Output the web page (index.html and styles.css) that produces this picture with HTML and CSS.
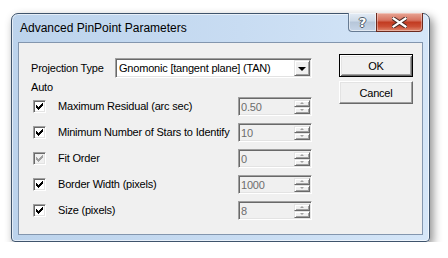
FILE: index.html
```html
<!DOCTYPE html>
<html>
  <head>
    <title>Advanced PinPoint Parameters</title>
    <link rel="stylesheet" href="styles.css">
  </head>
  <body>
    <div class="screen">
      <div class="window">
        <div class="titlebar">
          <span class="title">Advanced PinPoint Parameters</span>
          <div class="caption-buttons">
            <div class="cap-btn help">?</div>
            <div class="cap-btn close">
              <svg width="15" height="11" viewBox="0 0 15 11">
                <path d="M1.5 1.5 L13.5 9.5 M13.5 1.5 L1.5 9.5" stroke="#4a2a24" stroke-width="4.2" stroke-linecap="square" />
                <path d="M1.5 1.5 L13.5 9.5 M13.5 1.5 L1.5 9.5" stroke="#fff" stroke-width="2.2" stroke-linecap="square" />
              </svg>
            </div>
          </div>
        </div>
        <div class="client">
          <div class="params">
            <div class="projection">
              <label class="projection-label">Projection Type</label>
              <div class="combo">
                <span class="combo-text">Gnomonic [tangent plane] (TAN)</span>
                <span class="combo-btn"><span class="arrow-down"></span></span>
              </div>
            </div>
            <div class="auto">Auto</div>

            <div class="row">
              <span class="check">
                <svg width="7" height="7" viewBox="0 0 7 7"><path d="M0 2h1v3h-1zM1 3h1v3h-1zM2 4h1v3h-1zM3 3h1v3h-1zM4 2h1v3h-1zM5 1h1v3h-1zM6 0h1v3h-1z" /></svg>
              </span>
              <span class="row-label">Maximum Residual (arc sec)</span>
              <div class="spin">
                <span class="spin-value">0.50</span>
                <span class="spin-btns"><span class="spin-btn"><span class="tri-up"></span></span><span class="spin-btn"><span class="tri-down"></span></span></span>
              </div>
            </div>

            <div class="row">
              <span class="check">
                <svg width="7" height="7" viewBox="0 0 7 7"><path d="M0 2h1v3h-1zM1 3h1v3h-1zM2 4h1v3h-1zM3 3h1v3h-1zM4 2h1v3h-1zM5 1h1v3h-1zM6 0h1v3h-1z" /></svg>
              </span>
              <span class="row-label">Minimum Number of Stars to Identify</span>
              <div class="spin">
                <span class="spin-value">10</span>
                <span class="spin-btns"><span class="spin-btn"><span class="tri-up"></span></span><span class="spin-btn"><span class="tri-down"></span></span></span>
              </div>
            </div>

            <div class="row">
              <span class="check disabled">
                <svg width="7" height="7" viewBox="0 0 7 7"><path d="M0 2h1v3h-1zM1 3h1v3h-1zM2 4h1v3h-1zM3 3h1v3h-1zM4 2h1v3h-1zM5 1h1v3h-1zM6 0h1v3h-1z" /></svg>
              </span>
              <span class="row-label">Fit Order</span>
              <div class="spin">
                <span class="spin-value">0</span>
                <span class="spin-btns"><span class="spin-btn"><span class="tri-up"></span></span><span class="spin-btn"><span class="tri-down"></span></span></span>
              </div>
            </div>

            <div class="row">
              <span class="check">
                <svg width="7" height="7" viewBox="0 0 7 7"><path d="M0 2h1v3h-1zM1 3h1v3h-1zM2 4h1v3h-1zM3 3h1v3h-1zM4 2h1v3h-1zM5 1h1v3h-1zM6 0h1v3h-1z" /></svg>
              </span>
              <span class="row-label">Border Width (pixels)</span>
              <div class="spin">
                <span class="spin-value">1000</span>
                <span class="spin-btns"><span class="spin-btn"><span class="tri-up"></span></span><span class="spin-btn"><span class="tri-down"></span></span></span>
              </div>
            </div>

            <div class="row">
              <span class="check">
                <svg width="7" height="7" viewBox="0 0 7 7"><path d="M0 2h1v3h-1zM1 3h1v3h-1zM2 4h1v3h-1zM3 3h1v3h-1zM4 2h1v3h-1zM5 1h1v3h-1zM6 0h1v3h-1z" /></svg>
              </span>
              <span class="row-label">Size (pixels)</span>
              <div class="spin">
                <span class="spin-value">8</span>
                <span class="spin-btns"><span class="spin-btn"><span class="tri-up"></span></span><span class="spin-btn"><span class="tri-down"></span></span></span>
              </div>
            </div>
          </div>
          <div class="actions">
            <button class="btn default">OK</button>
            <button class="btn">Cancel</button>
          </div>
        </div>
      </div>
    </div>
  </body>
</html>
```

FILE: styles.css
```css
/* Win7 basic dialog with classic controls */
* {
  box-sizing: border-box;
}
body {
  margin: 0;
  background-color: #fff;
  color: #000;
  font-family: "Liberation Sans", Arial, sans-serif;
  font-size: 11px;
  letter-spacing: -0.2px;
}
.screen {
  padding: 13px 0 0 11px;
}
.window {
  width: 419px;
  height: 229px;
  border: 1px solid #3f546c;
  border-radius: 7px 7px 4px 4px;
  background: linear-gradient(to right, #bcd3ec, #c8dcf2 55%, #d5e6f8);
  box-shadow: inset 0 0 0 1px rgba(255, 255, 255, 0.6),
    3px 4px 10px rgba(0, 0, 0, 0.45);
  padding: 0 6px 6px 6px;
  display: flex;
  flex-direction: column;
}
.titlebar {
  height: 28px;
  display: flex;
  align-items: flex-start;
}
.title {
  font-family: "Liberation Sans", Arial, sans-serif;
  font-size: 12px;
  letter-spacing: 0;
  line-height: 16px;
  margin: 6px 0 0 2px;
}
.caption-buttons {
  margin: -1px 0 0 auto;
  display: flex;
}
.cap-btn {
  height: 19px;
  display: flex;
  align-items: center;
  justify-content: center;
}
.help {
  width: 28px;
  border: 1px solid #677b93;
  border-top: none;
  border-right: none;
  border-radius: 0 0 0 4px;
  background: linear-gradient(#e4ecf5, #ccd9e7 45%, #b6c6d9 50%, #c6d5e7);
  box-shadow: inset 0 0 0 1px rgba(255, 255, 255, 0.5);
  color: #fff;
  font-family: "DejaVu Sans", sans-serif;
  font-weight: bold;
  font-size: 13px;
  text-shadow: 1px 0 #4d5a69, -1px 0 #4d5a69, 0 1px #4d5a69, 0 -1px #4d5a69;
}
.close {
  width: 47px;
  border: 1px solid #6b2a1f;
  border-top: none;
  border-radius: 0 0 4px 0;
  background: linear-gradient(#e8a696, #d77360 40%, #c23c22 52%, #cc4f35 75%, #e08b71);
  box-shadow: inset 0 0 0 1px rgba(255, 255, 255, 0.35);
}
.client {
  flex: 1;
  display: flex;
  background-color: #f0f0f0;
  border: 1px solid #8396ae;
}
.params {
  width: 294px;
  padding: 15px 0 0 12px;
}
.projection {
  display: flex;
  align-items: center;
  height: 20px;
}
.projection-label {
  width: 84px;
}
.combo {
  width: 197px;
  height: 20px;
  display: flex;
  align-items: center;
  background-color: #fff;
  border: 1px solid;
  border-color: #a0a0a0 #fff #fff #a0a0a0;
  box-shadow: inset 1px 1px #696969, inset -1px -1px #e3e3e3;
  padding: 1px;
}
.combo-text {
  flex: 1;
  padding-left: 2px;
}
.combo-btn {
  width: 16px;
  height: 16px;
  display: flex;
  align-items: center;
  justify-content: center;
  background-color: #f0f0f0;
  border: 1px solid;
  border-color: #e3e3e3 #696969 #696969 #e3e3e3;
  box-shadow: inset 1px 1px #fff, inset -1px -1px #a0a0a0;
}
.arrow-down {
  width: 0;
  height: 0;
  border-left: 4px solid transparent;
  border-right: 4px solid transparent;
  border-top: 4px solid #000;
  margin-top: 1px;
}
.auto {
  margin-top: 3px;
  line-height: 12px;
  height: 12px;
}
.row {
  height: 26px;
  display: flex;
  align-items: center;
}
.check {
  width: 13px;
  height: 13px;
  margin-left: 2px;
  display: flex;
  align-items: center;
  justify-content: center;
  background-color: #fff;
  border: 1px solid;
  border-color: #a0a0a0 #fff #fff #a0a0a0;
  box-shadow: inset 1px 1px #696969, inset -1px -1px #e3e3e3;
  fill: #000;
}
.check.disabled {
  background-color: #f0f0f0;
  fill: #a0a0a0;
}
.row-label {
  width: 180px;
  margin-left: 12px;
}
.spin {
  width: 74px;
  height: 19px;
  display: flex;
  align-items: stretch;
  background-color: #f0f0f0;
  border: 1px solid;
  border-color: #a0a0a0 #fff #fff #a0a0a0;
  box-shadow: inset 1px 1px #696969, inset -1px -1px #e3e3e3;
  padding: 2px 1px 1px 2px;
  color: #6d6d6d;
}
.spin-value {
  flex: 1;
  line-height: 15px;
}
.spin-btns {
  width: 16px;
  display: flex;
  flex-direction: column;
}
.spin-btn {
  flex: 1;
  display: flex;
  align-items: center;
  justify-content: center;
  border: 1px solid;
  border-color: #e3e3e3 #696969 #696969 #e3e3e3;
  box-shadow: inset 1px 1px #fff, inset -1px -1px #a0a0a0;
}
.tri-up,
.tri-down {
  width: 0;
  height: 0;
  border-left: 2px solid transparent;
  border-right: 2px solid transparent;
}
.tri-up {
  border-bottom: 2px solid #a0a0a0;
}
.tri-down {
  border-top: 2px solid #a0a0a0;
}
.actions {
  padding: 11px 0 0 26px;
  display: flex;
  flex-direction: column;
  gap: 4px;
}
.btn {
  width: 74px;
  height: 23px;
  padding: 0;
  font-family: "Liberation Sans", Arial, sans-serif;
  font-size: 11px;
  letter-spacing: -0.2px;
  color: #000;
  background-color: #f0f0f0;
  border: 1px solid;
  border-color: #fff #696969 #696969 #fff;
  box-shadow: inset -1px -1px #a0a0a0, inset 1px 1px #e3e3e3;
}
.btn.default {
  border: 1px solid #000;
  box-shadow: inset 1px 1px #fff, inset -1px -1px #696969,
    inset 2px 2px #e3e3e3, inset -2px -2px #a0a0a0;
}
```
